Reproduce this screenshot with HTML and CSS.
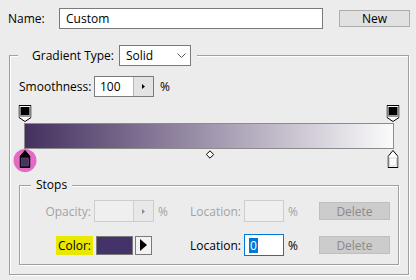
FILE: index.html
```html
<!DOCTYPE html>
<html>
<head>
<meta charset="utf-8">
<link rel="stylesheet" href="styles.css">
</head>
<body>
<div class="dialog">
  <div class="name-row">
    <span class="lbl">Name:</span>
    <div class="txt name-input">Custom</div>
    <div class="btn new">New</div>
  </div>

  <fieldset class="group outer">
    <legend class="type-legend">
      <span>Gradient Type:</span>
      <div class="select">
        <span>Solid</span>
        <svg class="chev" width="9" height="5" viewBox="0 0 9 5"><polyline points="0.5,0.5 4.5,4.5 8.5,0.5" fill="none" stroke="#555" stroke-width="1"/></svg>
      </div>
    </legend>

    <div class="smooth-row">
      <span class="smooth-lbl">Smoothness:</span>
      <div class="spin">
        <span class="spin-val">100</span>
        <span class="spin-arr"><svg width="3" height="5" viewBox="0 0 3 5"><polygon points="0,0 3,2.5 0,5" fill="#000"/></svg></span>
      </div>
      <span class="pct">%</span>
    </div>

    <div class="editor">
      <div class="track track-top">
        <svg class="stop stop-top" style="left:0%" width="13" height="17" viewBox="0 0 13 17">
          <path d="M0.5,0.5 H12.5 V12.5 L6.5,16.5 L0.5,12.5 Z" fill="#fff" stroke="#000"/>
          <rect x="2" y="2" width="9" height="8" fill="#000"/>
          <rect x="1" y="10" width="11" height="2" fill="#9a9a9a"/>
        </svg>
        <svg class="stop stop-top" style="left:100%" width="13" height="17" viewBox="0 0 13 17">
          <path d="M0.5,0.5 H12.5 V12.5 L6.5,16.5 L0.5,12.5 Z" fill="#fff" stroke="#000"/>
          <rect x="2" y="2" width="9" height="8" fill="#000"/>
          <rect x="1" y="10" width="11" height="2" fill="#9a9a9a"/>
        </svg>
      </div>
      <div class="bar"></div>
      <div class="track track-bottom">
        <div class="hilite" style="left:0%"></div>
        <svg class="stop stop-bottom" style="left:0%" width="11" height="18" viewBox="0 0 11 18">
          <path d="M0.5,17.5 V6.5 L5.5,0.5 L10.5,6.5 V17.5 Z" fill="#000" stroke="#000"/>
          <rect x="2" y="8" width="7" height="8" fill="#46335f" stroke="#7a4f9a" stroke-width="0.6"/>
        </svg>
        <svg class="diamond" style="left:50.3%" width="9" height="9" viewBox="0 0 9 9">
          <polygon points="4.5,0.8 8.2,4.5 4.5,8.2 0.8,4.5" fill="#fff" stroke="#000" stroke-width="1"/>
        </svg>
        <svg class="stop stop-bottom" style="left:100%" width="11" height="18" viewBox="0 0 11 18">
          <path d="M0.5,17.5 V6.5 L5.5,0.5 L10.5,6.5 V17.5 Z" fill="#fff" stroke="#000"/>
          <rect x="2" y="8" width="7" height="8" fill="#fbfbfb" stroke="#bbb" stroke-width="0.6"/>
        </svg>
      </div>
    </div>

    <fieldset class="group stops">
      <legend class="stops-legend">Stops</legend>
      <div class="stops-grid">
        <span class="cell-lbl dis">Opacity:</span>
        <div class="spin spin-dis">
          <span class="spin-val"></span>
          <span class="spin-arr"><svg width="3" height="5" viewBox="0 0 3 5"><polygon points="0,0 3,2.5 0,5" fill="#8a8a8a"/></svg></span>
        </div>
        <span class="cell-pct dis">%</span>
        <span class="cell-loc dis">Location:</span>
        <div class="loc-input loc-dis"></div>
        <span class="cell-pct dis">%</span>
        <div class="btn del">Delete</div>

        <span class="cell-lbl"><span class="mark">Color:</span></span>
        <div class="color-cell">
          <div class="swatch"></div>
          <div class="arrow-btn"><svg width="7" height="12" viewBox="0 0 7 12"><polygon points="0,0 7,6 0,12" fill="#000"/></svg></div>
        </div>
        <span></span>
        <span class="cell-loc">Location:</span>
        <div class="loc-input loc-active"><span class="sel">0</span></div>
        <span class="cell-pct">%</span>
        <div class="btn del">Delete</div>
      </div>
    </fieldset>
  </fieldset>
</div>
</body>
</html>
```

FILE: styles.css
```css
html, body {
  margin: 0;
  padding: 0;
}
body {
  background: #ececec;
  font-family: "Open Sans", "Noto Sans", sans-serif;
  font-size: 12px;
  color: #000;
  width: 416px;
  height: 280px;
  overflow: hidden;
}
.dialog {
  display: flex;
  flex-direction: column;
  align-items: flex-start;
}
.name-row {
  display: flex;
  align-items: center;
  height: 21px;
  margin-top: 8px;
  padding-left: 8px;
}
.lbl {
  width: 51px;
}
.txt {
  box-sizing: border-box;
  height: 21px;
  border: 1px solid #7a7a7a;
  background: #fff;
  padding-left: 6px;
  display: flex;
  align-items: center;
}
.name-input {
  width: 264px;
}
.btn {
  box-sizing: border-box;
  width: 71px;
  height: 17px;
  border: 1px solid #adadad;
  background: #e1e1e1;
  display: flex;
  align-items: center;
  justify-content: center;
}
.new {
  margin-left: 16px;
}

.group {
  margin: 0;
  min-width: 0;
  box-sizing: border-box;
  border: 1px solid #a0a0a0;
  box-shadow: inset 1px 1px 0 #fff, 1px 1px 0 #fff;
}
.outer {
  margin: 16px 0 0 9px;
  width: 400px;
  padding: 10px 9px 9px 9px;
}
.type-legend {
  margin-left: -1px;
  padding: 0 6px 0 14px;
  display: flex;
  align-items: center;
  gap: 5px;
  background: #ececec;
}
.select {
  box-sizing: border-box;
  width: 72px;
  height: 21px;
  border: 1px solid #7a7a7a;
  background: #fff;
  display: flex;
  align-items: center;
  justify-content: space-between;
  padding: 0 4px 0 6px;
}
.chev {
  display: block;
}

.smooth-row {
  display: flex;
  align-items: center;
  height: 21px;
}
.smooth-lbl {
  width: 75px;
}
.spin {
  box-sizing: border-box;
  width: 60px;
  height: 21px;
  border: 1px solid #7a7a7a;
  display: flex;
}
.spin-val {
  flex: 1;
  background: #fff;
  padding-left: 5px;
  display: flex;
  align-items: center;
}
.spin-arr {
  width: 19px;
  background: #e3e3e3;
  border-left: 1px solid #b5b5b5;
  display: flex;
  align-items: center;
  justify-content: center;
}
.spin-arr svg {
  display: block;
}
.pct {
  margin-left: 6px;
}

.editor {
  margin-top: 8px;
  height: 66px;
  display: flex;
  flex-direction: column;
}
.track {
  position: relative;
  margin-left: 6px;
  width: 368px;
}
.track-top {
  height: 18px;
}
.track-bottom {
  height: 22px;
}
.stop {
  position: absolute;
  display: block;
  transform: translateX(-50%);
}
.stop-top {
  top: 0;
}
.stop-bottom {
  top: 1px;
  z-index: 2;
}
.hilite {
  position: absolute;
  top: 0;
  width: 23px;
  height: 23px;
  border-radius: 50%;
  background: #e36bc8;
  transform: translateX(-50%);
  z-index: 1;
}
.diamond {
  position: absolute;
  top: 1px;
  display: block;
  transform: translateX(-50%);
}
.bar {
  box-sizing: border-box;
  margin-left: 5px;
  width: 370px;
  height: 26px;
  border: 1px solid #8c8c8c;
  background: linear-gradient(to right, #44305f, #fbfbfb);
}

.stops {
  margin-top: 6px;
  width: 380px;
  padding: 7px 0 8px 0;
}
.stops-legend {
  margin-left: 11px;
  padding: 0 5px;
  line-height: 16px;
  background: #ececec;
}
.stops-grid {
  display: grid;
  grid-template-columns: 74px 60px 36px 54px 40px 35px 71px;
  grid-auto-rows: 22px;
  row-gap: 12px;
  align-items: center;
}
.dis {
  color: #a3a3a3;
}
.cell-lbl {
  justify-self: end;
  padding-right: 3px;
}
.mark {
  background: #e8e800;
  padding: 1px 2px;
  margin-right: -2px;
}
.spin-dis {
  height: 22px;
  border-color: #cdcdcd;
}
.spin-dis .spin-val {
  background: #efefef;
}
.spin-dis .spin-arr {
  background: #e8e8e8;
  border-left-color: #d0d0d0;
}
.cell-pct {
  padding-left: 4px;
}
.loc-input {
  box-sizing: border-box;
  height: 22px;
  width: 40px;
  display: flex;
  align-items: center;
  padding-left: 4px;
}
.loc-dis {
  border: 1px solid #cdcdcd;
  background: #efefef;
}
.loc-active {
  border: 1px solid #0078d7;
  background: #fff;
}
.sel {
  background: #0078d7;
  color: #fff;
  padding: 0 1px;
  line-height: 15px;
}
.del {
  height: 18px;
  background: #cccccc;
  border-color: #bfbfbf;
  color: #8a8a8a;
}
.color-cell {
  display: flex;
  align-items: center;
  gap: 2px;
  padding-left: 2px;
}
.swatch {
  box-sizing: border-box;
  width: 37px;
  height: 19px;
  border: 1px solid #7a7a7a;
  background: #44336a;
}
.arrow-btn {
  box-sizing: border-box;
  width: 17px;
  height: 19px;
  border: 1px solid #7a7a7a;
  background: #f2f2f2;
  display: flex;
  align-items: center;
  justify-content: center;
}
.arrow-btn svg {
  display: block;
}
```
